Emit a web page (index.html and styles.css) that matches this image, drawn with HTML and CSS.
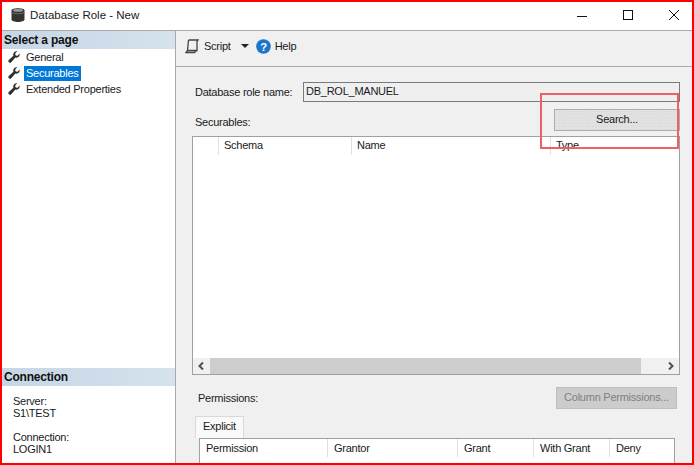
FILE: index.html
```html
<!DOCTYPE html>
<html lang="en">
<head>
<meta charset="utf-8">
<title>Database Role - New</title>
<link rel="stylesheet" href="styles.css">
</head>
<body>
<div class="window">
  <header class="titlebar">
    <svg class="db-icon" width="14" height="16" viewBox="0 0 14 16"><path d="M0.5 3.5C0.5 0.6 13.5 0.6 13.5 3.5V12.5C13.5 15.8 0.5 15.8 0.5 12.5Z" fill="#333"/><ellipse cx="7" cy="3.4" rx="5" ry="1.4" fill="#9a9a9a"/><path d="M0.5 5.4C3 7.2 11 7.2 13.5 5.4" fill="none" stroke="#777" stroke-width=".8"/></svg>
    <span class="title">Database Role - New</span>
    <div class="controls">
      <svg width="12" height="12" viewBox="0 0 12 12"><path d="M1 7.5H11" stroke="#111" fill="none"/></svg>
      <svg width="12" height="12" viewBox="0 0 12 12"><rect x="1.5" y="1.5" width="9" height="9" stroke="#111" fill="none"/></svg>
      <svg width="12" height="12" viewBox="0 0 12 12"><path d="M1 1L11 11M11 1L1 11" stroke="#111" fill="none"/></svg>
    </div>
  </header>
  <div class="main">
    <aside class="sidebar">
      <div class="pages">
        <h2 class="band">Select a page</h2>
        <ul class="page-list">
          <li class="page"><svg class="wrench" viewBox="0 0 12 12"><use href="#w"/></svg><span class="page-name">General</span></li>
          <li class="page"><svg class="wrench" viewBox="0 0 12 12"><use href="#w"/></svg><span class="page-name selected">Securables</span></li>
          <li class="page"><svg class="wrench" viewBox="0 0 12 12"><use href="#w"/></svg><span class="page-name">Extended Properties</span></li>
        </ul>
      </div>
      <div class="connection">
        <h2 class="band">Connection</h2>
        <div class="conn-block"><div>Server:</div><div>S1\TEST</div></div>
        <div class="conn-block"><div>Connection:</div><div>LOGIN1</div></div>
      </div>
    </aside>
    <section class="content">
      <div class="toolbar">
        <svg class="script-icon" width="14" height="16" viewBox="0 0 14 16"><path d="M3.5 2H13L12 3.5V12.5H2.5L1 14.5H9.5L11.5 12.5M3.5 2L2.5 12.5" fill="none" stroke="#444" stroke-width="1.3"/></svg>
        <span>Script</span>
        <span class="caret"></span>
        <svg class="help-icon" width="15" height="15" viewBox="0 0 16 16"><circle cx="8" cy="8" r="7.8" fill="#1c75c8"/><text x="8" y="12.5" text-anchor="middle" class="help-q">?</text></svg>
        <span>Help</span>
      </div>
      <div class="form">
        <div class="role-row">
          <span class="role-label">Database role name:</span>
          <div class="role-input">DB_ROL_MANUEL</div>
        </div>
        <div class="sec-row">
          <span class="sec-label">Securables:</span>
          <div class="btn search">Search...</div>
        </div>
        <div class="grid">
          <div class="grid-head">
            <div class="gh gh-0"></div>
            <div class="gh gh-schema">Schema</div>
            <div class="gh gh-name">Name</div>
            <div class="gh gh-type">Type</div>
          </div>
          <div class="grid-body"></div>
          <div class="hscroll">
            <svg class="arrow" viewBox="0 0 17 16"><path d="M10 4.5L6.5 8L10 11.5" fill="none" stroke="#505050" stroke-width="2"/></svg>
            <div class="thumb"></div>
            <svg class="arrow arrow-end" viewBox="0 0 17 16"><path d="M7 4.5L10.5 8L7 11.5" fill="none" stroke="#505050" stroke-width="2"/></svg>
          </div>
        </div>
        <div class="perm-row">
          <span>Permissions:</span>
          <div class="btn disabled">Column Permissions...</div>
        </div>
        <div class="tab">Explicit</div>
        <div class="perm-table">
          <div class="pt pt-perm">Permission</div>
          <div class="pt pt-grantor">Grantor</div>
          <div class="pt pt-grant">Grant</div>
          <div class="pt pt-with">With Grant</div>
          <div class="pt pt-deny">Deny</div>
        </div>
      </div>
    </section>
  </div>
  <div class="annotation"></div>
</div>
<svg class="defs" width="0" height="0"><defs><path id="w" d="M11.7 3.4a3.4 3.4 0 0 1-4.4 3.2L3.2 11.2a1.5 1.5 0 0 1-2.4-2.2L5.4 4.8A3.4 3.4 0 0 1 9.3.3L7.2 2.4 7.6 4.4 9.6 4.8 11.6 2.6Z" fill="#2e2e2e"/></defs></svg>
</body>
</html>
```
FILE: styles.css
```css
* { box-sizing: border-box; }
html, body { margin: 0; height: 100%; }
body { font: 11px/15px "Liberation Sans", Arial, sans-serif; letter-spacing: -0.25px; color: #1a1a1a; background: #fff; overflow: hidden; }
.defs { position: absolute; }
.window { position: relative; width: 694px; height: 465px; border: 2px solid #f00; background: #fff; display: flex; flex-direction: column; overflow: hidden; }
.titlebar { flex: none; display: flex; align-items: center; padding: 0 0 2px 9px; border-bottom: 1px solid #a9a9a9; height: 29px; }
.db-icon { margin-right: 5px; }
.title { font-size: 11.5px; letter-spacing: 0; }
.controls { margin-left: auto; display: flex; gap: 34px; padding-right: 12px; }
.main { flex: 1; display: flex; min-height: 0; }
.sidebar { width: 174px; flex: none; border-right: 1px solid #a9a9a9; display: flex; flex-direction: column; justify-content: space-between; }
.band { margin: 0; height: 18px; padding-left: 2px; font-size: 12px; line-height: 18px; font-weight: bold; letter-spacing: -0.2px; color: #111; background: linear-gradient(to right, #c6d6e4, #d5e2ee); }
.page-list { list-style: none; margin: 0; padding: 0; }
.page { height: 16px; display: flex; align-items: center; padding-left: 6px; }
.wrench { width: 12px; height: 12px; margin-right: 4px; flex: none; }
.page-name { padding: 0 2px; height: 15px; }
.selected { background: #0078d7; color: #fff; }
.connection { height: 95px; overflow: hidden; }
.conn-block { padding-left: 11px; line-height: 12px; margin-top: 11px; }
.conn-block + .conn-block { margin-top: 12px; }
.connection .band { margin-bottom: -2px; }
.content { flex: 1; background: #f0f0f0; min-width: 0; }
.toolbar { height: 36px; border-bottom: 1px solid #a9a9b3; display: flex; align-items: center; padding: 0 0 5px 9px; }
.script-icon { margin-right: 5px; }
.caret { width: 0; height: 0; border: 4px solid transparent; border-top-color: #222; border-bottom: 0; margin: 0 7px 0 10px; }
.help-icon { margin-right: 4px; }
.help-q { fill: #fff; font: bold 12px "Liberation Sans", sans-serif; }
.form { padding: 15px 12px 0 16px; }
.role-row { display: flex; align-items: center; height: 20px; padding-left: 3px; }
.role-label { width: 108px; flex: none; margin-top: 1px; }
.role-input { flex: 1; height: 20px; border: 1px solid #7a7a7a; padding-left: 2px; line-height: 17px; background: #efefef; }
.sec-row { display: flex; justify-content: space-between; height: 22px; margin-top: 7px; padding-left: 3px; }
.sec-label { margin-top: 6px; }
.btn { height: 22px; padding-bottom: 1px; display: flex; align-items: center; justify-content: center; white-space: nowrap; }
.search { width: 126px; background-color: #e1e1e1; background-image: radial-gradient(#d8d8d8 .6px, transparent .8px); background-size: 3px 3px; border: 1px solid #adadad; }
.grid { margin-top: 5px; height: 239px; border: 1px solid #a0a0a0; background: #fff; display: flex; flex-direction: column; }
.grid-head { display: flex; height: 18px; flex: none; }
.gh { border-right: 1px solid #e0e0e0; padding-left: 5px; line-height: 17px; }
.gh-0 { width: 26px; }
.gh-schema { width: 133px; }
.gh-name { width: 199px; }
.gh-type { flex: 1; border-right: 0; }
.grid-body { flex: 1; }
.hscroll { height: 16px; flex: none; display: flex; background: #f0f0f0; }
.arrow { width: 17px; height: 16px; flex: none; }
.arrow-end { margin-left: auto; }
.thumb { width: 431px; background: #cdcdcd; }
.perm-row { display: flex; justify-content: space-between; height: 22px; margin-top: 12px; padding: 0 3px 0 6px; }
.perm-row span { margin-top: 4px; }
.disabled { width: 121px; background: #cccccc; border: 1px solid #bfbfbf; color: #7f7f7f; }
.tab { width: 49px; height: 22px; margin: 7px 0 0 3px; background: #f9f9f9; border: 1px solid #d9d9d9; border-bottom: 0; padding-left: 7px; line-height: 19px; }
.perm-table { display: flex; height: 30px; width: 476px; margin-left: 7px; background: #fff; border: 1px solid #a0a0a0; }
.pt { height: 18px; border-right: 1px solid #e0e0e0; padding-left: 6px; line-height: 18px; }
.pt-perm { width: 128px; }
.pt-grantor { width: 130px; }
.pt-grant { width: 76px; }
.pt-with { width: 76px; }
.pt-deny { flex: 1; border-right: 0; }
.annotation { position: absolute; left: 538px; top: 91px; width: 139px; height: 56px; border: 2px solid #ef5f66; pointer-events: none; }
```
